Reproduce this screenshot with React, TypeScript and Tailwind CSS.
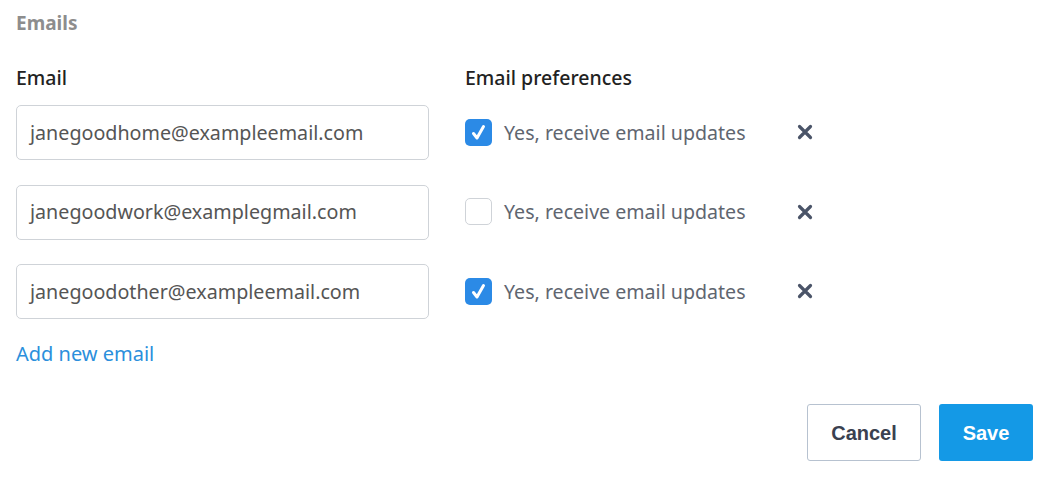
import { useState } from 'react';

type Row = { email: string; subscribed: boolean };

const initialRows: Row[] = [
  { email: 'janegoodhome@exampleemail.com', subscribed: true },
  { email: 'janegoodwork@examplegmail.com', subscribed: false },
  { email: 'janegoodother@exampleemail.com', subscribed: true },
];

function Check({ checked }: { checked: boolean }) {
  if (!checked) {
    return <span className="block h-[27px] w-[27px] rounded-[5px] border border-[#cfd3d8] bg-white" />;
  }
  return (
    <span className="flex h-[27px] w-[27px] items-center justify-center rounded-[5px] bg-[#2b8ae6]">
      <svg width="15" height="17" viewBox="0 0 15 17" fill="none">
        <path d="M2.5 9.5 L6 14 L12.5 2.5" stroke="white" strokeWidth="3" strokeLinecap="round" strokeLinejoin="round" />
      </svg>
    </span>
  );
}

function Cross() {
  return (
    <svg width="16" height="16" viewBox="0 0 16 16">
      <path d="M2.5 2.5 L13.5 13.5 M13.5 2.5 L2.5 13.5" stroke="#4a5468" strokeWidth="3.2" strokeLinecap="round" />
    </svg>
  );
}

export default function App() {
  const [rows] = useState(initialRows);

  return (
    <div className="h-[491px] w-[1061px] bg-white px-4 font-['Noto_Sans',sans-serif]">
      <h2 className="pt-[9px] text-[19px] leading-[28px] font-bold text-[#8d8d8d]">Emails</h2>

      <div className="mt-[27px] grid grid-cols-[413px_1fr] gap-x-[36px]">
        <div className="text-[19.5px] leading-[28px] font-medium text-[#222]">Email</div>
        <div className="text-[19.5px] leading-[28px] font-medium text-[#222]">Email preferences</div>
      </div>

      <ul className="mt-[13px] flex flex-col gap-[24.5px]">
        {rows.map((row) => (
          <li key={row.email} className="grid grid-cols-[413px_1fr] items-center gap-x-[36px]">
            <div className="flex h-[55px] items-center rounded-[5px] border border-[#cfd3d8] px-[13px] text-[19.7px] text-[#555]">
              {row.email}
            </div>
            <div className="flex items-center">
              <Check checked={row.subscribed} />
              <span className="ml-[12px] w-[293px] text-[19.6px] text-[#5f6670]">Yes, receive email updates</span>
              <Cross />
            </div>
          </li>
        ))}
      </ul>

      <a className="mt-[21px] block text-[20px] leading-[28px] text-[#2b8fdc]">Add new email</a>

      <div className="mt-[36px] flex justify-end gap-[18px] pr-[12px] font-['Liberation_Sans',sans-serif]">
        <button className="h-[57px] w-[114px] rounded-[3px] border border-[#b7c2d0] bg-white text-[20px] font-bold text-[#3a4150]">
          Cancel
        </button>
        <button className="h-[57px] w-[94px] rounded-[3px] bg-[#1499e6] text-[20px] font-bold text-white">
          Save
        </button>
      </div>
    </div>
  );
}
